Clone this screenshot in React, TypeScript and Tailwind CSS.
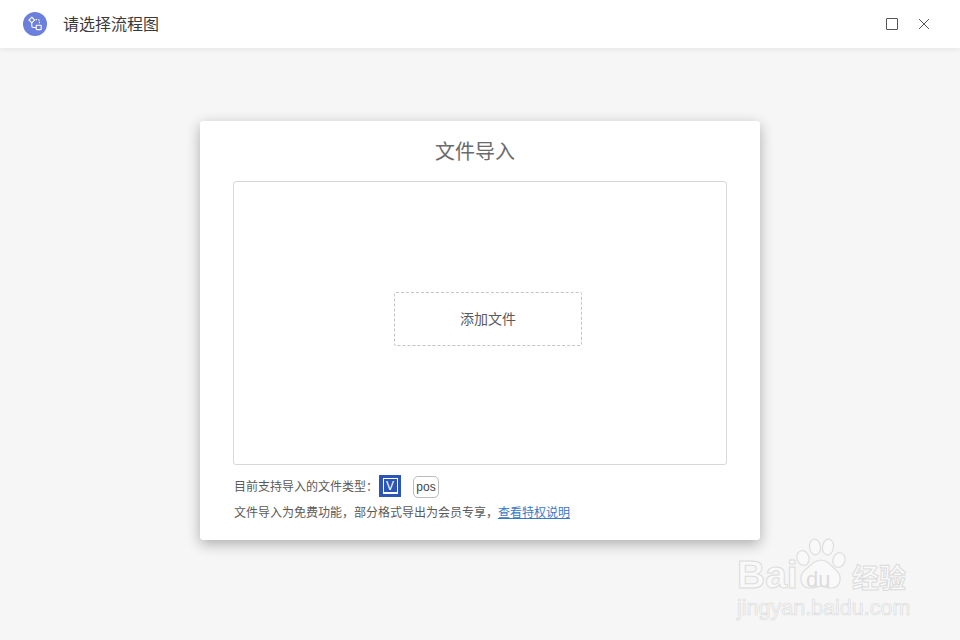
import React from 'react';

const font = { fontFamily: '"Microsoft YaHei", "Liberation Sans", "Noto Sans CJK SC", sans-serif' };

const FlowLogo: React.FC = () => (
  <div className="flex h-6 w-6 items-center justify-center rounded-full bg-[#6b7fdc]">
    <svg width="16" height="16" viewBox="0 0 16 16" fill="none" stroke="#fff" strokeWidth="1.1">
      <path d="M4.8 1.2 7.6 4 4.8 6.8 2 4Z" />
      <rect x="9.2" y="9.2" width="5" height="4.4" rx="0.6" />
      <path d="M4.8 6.8V10a1.5 1.5 0 0 0 1.5 1.5h2.9" />
      <path d="M8.6 3.6h2.4a1.4 1.4 0 0 1 1.4 1.4v3" strokeDasharray="1.4 1.2" />
    </svg>
  </div>
);

const VisioIcon: React.FC = () => (
  <div className="flex h-[22px] w-[22px] items-center justify-center bg-[#2c55b5]">
    <div className="flex h-[16px] w-[15px] items-center justify-center border border-white border-b-2 text-[12px] leading-none text-white">
      V
    </div>
  </div>
);

const Watermark: React.FC = () => {
  const outline = 'font-bold text-[#f9f9f9] [-webkit-text-stroke:1px_#dcdcdc]';
  return (
    <div className="pointer-events-none absolute left-[736px] top-[536px] h-[84px] w-[176px]">
      <svg className="absolute left-[59px] top-[2px]" width="52" height="52" viewBox="0 0 52 52" fill="#f9f9f9" stroke="#dedede" strokeWidth="1.2">
        <ellipse cx="8" cy="20" rx="6" ry="7.5" transform="rotate(-20 8 20)" />
        <ellipse cx="20" cy="9" rx="5.5" ry="8" transform="rotate(-8 20 9)" />
        <ellipse cx="33" cy="9" rx="5.5" ry="8" transform="rotate(8 33 9)" />
        <ellipse cx="44" cy="22" rx="6" ry="7.5" transform="rotate(20 44 22)" />
        <path d="M26 22c7 0 10 6 15 10 7 6 5 18-5 18-5 0-7-2-10-2s-6 2-11 2c-10 0-12-12-5-18 5-4 9-10 16-10Z" />
      </svg>
      <span className={`absolute left-[1px] top-[17px] text-[39px] leading-[44px] ${outline}`} style={{ fontFamily: '"Liberation Sans", sans-serif' }}>
        Bai
      </span>
      <span className="absolute left-[70px] top-[33px] text-[22px] leading-[22px] text-[#dcdcdc]" style={{ fontFamily: '"Liberation Sans", sans-serif' }}>
        du
      </span>
      <span className={`absolute left-[116px] top-[24px] text-[27px] leading-[34px] ${outline}`} style={{ fontFamily: '"Noto Sans CJK SC", sans-serif' }}>
        经验
      </span>
      <span className="absolute left-[1px] top-[60px] text-[21.5px] leading-[24px] text-[#f9f9f9] [-webkit-text-stroke:0.7px_#dcdcdc]" style={{ fontFamily: '"Liberation Sans", sans-serif' }}>
        jingyan.baidu.com
      </span>
    </div>
  );
};

export default function App() {
  return (
    <div className="relative flex h-[640px] w-[960px] flex-col overflow-hidden bg-[#f6f6f6]" style={font}>
      <header className="flex h-12 items-center justify-between bg-white pl-[23px] pr-[30px] shadow-[0_1px_6px_rgba(0,0,0,0.08)]">
        <div className="flex items-center gap-4">
          <FlowLogo />
          <span className="mt-px text-[16px] text-[#3a3a3a]">请选择流程图</span>
        </div>
        <div className="flex items-center gap-[20px]">
          <div className="h-3 w-3 rounded-[1px] border border-[#555]" />
          <svg width="12" height="12" viewBox="0 0 12 12" stroke="#555" strokeWidth="1" fill="none">
            <path d="M1 1l10 10M11 1 1 11" />
          </svg>
        </div>
      </header>

      <main className="flex flex-1 justify-center pt-[73px]">
        <div className="flex h-[419px] w-[560px] flex-col rounded-[3px] bg-white px-[33px] shadow-[0_4px_14px_rgba(0,0,0,0.3)]">
          <h1 className="mr-[10px] mt-[17px] h-[28px] text-center text-[20px] font-normal leading-[28px] text-[#6b6b6b]">
            文件导入
          </h1>
          <div className="mt-[15px] flex h-[284px] items-center justify-center rounded-[3px] border border-[#d8d8d8] pb-[8px] pl-[16px]">
            <div className="flex h-[54px] w-[188px] items-center justify-center rounded-[2px] border border-dashed border-[#c4c4c4] text-[14px] text-[#5a5a5a]">
              添加文件
            </div>
          </div>
          <div className="mt-[9px] flex h-[24px] items-center text-[12px] text-[#5a5a5a]">
            <span className="ml-px mt-[2px]">目前支持导入的文件类型：</span>
            <div className="ml-[1px]">
              <VisioIcon />
            </div>
            <div className="ml-[12px] mt-[1px] flex h-[22px] w-[26px] items-center justify-center rounded-[5px] border border-[#bbb] text-[12px] text-[#444]">
              pos
            </div>
          </div>
          <div className="ml-px mt-[6px] flex h-[18px] items-center text-[12px] text-[#5a5a5a]">
            <span>文件导入为免费功能，部分格式导出为会员专享，</span>
            <a className="text-[#3a78c2] underline">查看特权说明</a>
          </div>
        </div>
      </main>

      <Watermark />
    </div>
  );
}
